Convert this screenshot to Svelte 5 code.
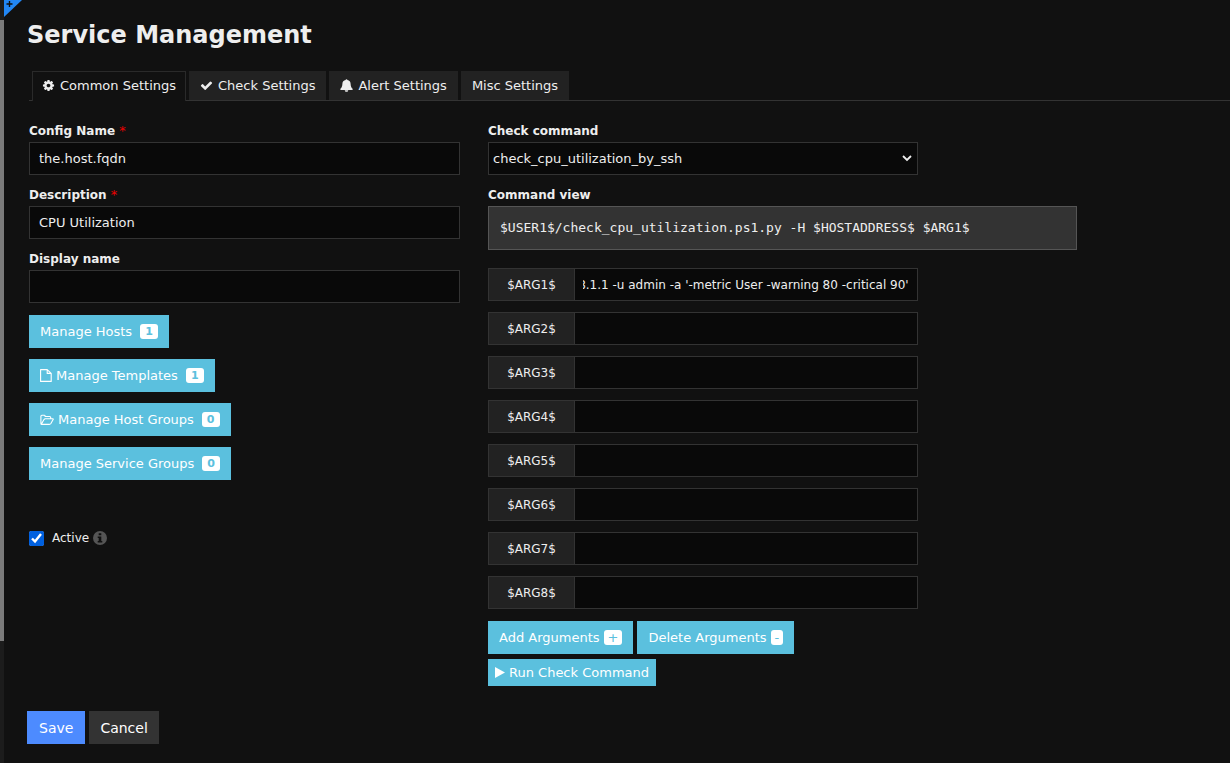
<script>
  const tabs = [
    { label: 'Common Settings', icon: 'cog' },
    { label: 'Check Settings', icon: 'check' },
    { label: 'Alert Settings', icon: 'bell' },
    { label: 'Misc Settings', icon: '' },
  ];
  let active = $state(0);

  const managers = [
    { label: 'Manage Hosts', icon: '', count: 1 },
    { label: 'Manage Templates', icon: 'file', count: 1 },
    { label: 'Manage Host Groups', icon: 'folder', count: 0 },
    { label: 'Manage Service Groups', icon: '', count: 0 },
  ];

  let args = $state([
    "-H 192.168.1.1 -u admin -a '-metric User -warning 80 -critical 90'",
    '', '', '', '', '', '', '',
  ]);

  // Long argument values show their end rather than their start.
  function showEnd(node) {
    node.scrollLeft = node.scrollWidth;
  }
</script>

{#snippet icon(name)}
  {#if name === 'cog'}
    <svg class="icon" width="13" height="13" viewBox="0 0 1792 1792" aria-hidden="true">
      <path fill="currentColor" d="M1152 896q0-106-75-181t-181-75-181 75-75 181 75 181 181 75 181-75 75-181zm512-109v222q0 12-8 23t-20 13l-185 28q-19 54-39 91 35 50 107 138 10 12 10 25t-9 23q-27 37-99 108t-94 71q-12 0-26-9l-138-108q-44 23-91 38-16 136-29 186-7 28-36 28h-222q-14 0-24.500-8.500t-11.500-21.500l-28-184q-49-16-90-37l-141 107q-10 9-25 9-14 0-25-11-126-114-165-168-7-10-7-23 0-12 8-23 15-21 51-66.500t54-70.500q-27-50-41-99l-183-27q-13-2-21-12.500t-8-23.500v-222q0-12 8-23t19-13l186-28q14-46 39-92-40-57-107-138-10-12-10-24 0-10 9-23 26-36 98.500-107.500t94.500-71.500q13 0 26 10l138 107q44-23 91-38 16-136 29-186 7-28 36-28h222q14 0 24.500 8.500t11.500 21.500l28 184q49 16 90 37l142-107q9-9 24-9 13 0 25 10 129 119 165 170 7 8 7 22 0 12-8 23-15 21-51 66.500t-54 70.500q26 50 41 98l183 28q13 2 21 12.500t8 23.500z" />
    </svg>
  {:else if name === 'check'}
    <svg class="icon" width="13" height="13" viewBox="0 0 1792 1792" aria-hidden="true">
      <path fill="currentColor" d="M1671 566q0 40-28 68l-724 724-136 136q-28 28-68 28t-68-28l-136-136-362-362q-28-28-28-68t28-68l136-136q28-28 68-28t68 28l294 295 656-657q28-28 68-28t68 28l136 136q28 28 28 68z" />
    </svg>
  {:else if name === 'bell'}
    <svg class="icon" width="13" height="13" viewBox="0 0 13 13" aria-hidden="true">
      <path d="M6.5 0.2c.6 0 .9.4.9.9 2.100.4 3.100 1.800 3.200 3.600.1 2.600.7 3.900 2 5.100V10.900H.4V9.800c1.300-1.200 1.900-2.500 2-5.100.1-1.800 1.100-3.200 3.200-3.600 0-.5.300-.9.900-.9zM4.800 11.200h3.400c0 .9-.7 1.600-1.700 1.600s-1.700-.7-1.700-1.600z" fill="currentColor" />
    </svg>
  {:else if name === 'file'}
    <svg class="icon" width="12" height="13" viewBox="0 0 12 13" aria-hidden="true">
      <path d="M.6.6h6.600l4 3.800v8H.6zM7.200.6v3.800h4" fill="none" stroke="currentColor" stroke-width="1.100" stroke-linejoin="round" />
    </svg>
  {:else if name === 'folder'}
    <svg class="icon" width="14" height="12" viewBox="0 0 14 12" aria-hidden="true">
      <path d="M.9 9.800V2.200q0-1 1-1h2.300q.9 0 .9.900v.4h4.600q1 0 1 1v1.300M1.300 10.300 4 5.600q.5-.8 1.300-.8h7.500q.8 0 .3.800L10.900 9.500q-.6.900-1.500.9H1.500q-.7 0-.6-.8" fill="none" stroke="currentColor" stroke-width="1.100" stroke-linejoin="round" />
    </svg>
  {/if}
{/snippet}

<div class="page">
  <div class="rail" aria-hidden="true"><div class="thumb"></div></div>
  <svg class="corner" width="18" height="17" viewBox="0 0 18 17" aria-hidden="true">
    <path d="M0 0h18L0 17z" fill="#2287f5" />
    <path d="M5.500 1v6M2.500 4h6" stroke="#111" stroke-width="1.400" />
  </svg>

  <main>
    <h1>Service Management</h1>

    <nav class="tabs">
      {#each tabs as tab, i}
        <button type="button" class="tab" class:active={active === i} onclick={() => (active = i)}>
          {@render icon(tab.icon)}<span>{tab.label}</span>
        </button>
      {/each}
    </nav>

    <form onsubmit={(e) => e.preventDefault()}>
      <div class="columns">
        <section class="left">
          <div class="field">
            <label for="config">Config Name <span class="req">*</span></label>
            <input id="config" class="box" type="text" value="the.host.fqdn" />
          </div>
          <div class="field">
            <label for="desc">Description <span class="req">*</span></label>
            <input id="desc" class="box" type="text" value="CPU Utilization" />
          </div>
          <div class="field">
            <label for="display">Display name</label>
            <input id="display" class="box" type="text" value="" />
          </div>
          <div class="managers">
            {#each managers as m}
              <button type="button" class="info">
                {@render icon(m.icon)}<span>{m.label}</span><span class="badge count">{m.count}</span>
              </button>
            {/each}
          </div>
          <div class="active-row">
            <input id="active" type="checkbox" checked />
            <label for="active">Active</label>
            <svg width="14" height="14" viewBox="0 0 14 14" aria-hidden="true">
              <circle cx="7" cy="7" r="7" fill="#555" />
              <path d="M5.700 2.200h2.600v2H5.700zM4.700 5.400h3.600v4.500h1v1.600H4.700V9.900h1V7h-1z" fill="#111" />
            </svg>
          </div>
        </section>

        <section class="right">
          <div class="field narrow">
            <label for="command">Check command</label>
            <div class="select">
              <select id="command" class="box">
                <option>check_cpu_utilization_by_ssh</option>
              </select>
              <svg width="10" height="7" viewBox="0 0 10 7" aria-hidden="true">
                <path d="M1 1l4 4 4-4" fill="none" stroke="#eee" stroke-width="1.800" />
              </svg>
            </div>
          </div>
          <div class="field view">
            <span class="title">Command view</span>
            <pre>$USER1$/check_cpu_utilization.ps1.py -H $HOSTADDRESS$ $ARG1$</pre>
          </div>
          <div class="args narrow">
            {#each args as _, i}
              <div class="arg">
                <label for="arg{i + 1}">$ARG{i + 1}$</label>
                <input id="arg{i + 1}" class="box" type="text" bind:value={args[i]} use:showEnd />
              </div>
            {/each}
          </div>
          <div class="actions">
            <button type="button" class="info" onclick={() => args.push('')}>
              <span>Add Arguments</span><span class="badge">+</span>
            </button>
            <button type="button" class="info" onclick={() => args.pop()}>
              <span>Delete Arguments</span><span class="badge">-</span>
            </button>
          </div>
          <button type="button" class="info small">
            <svg width="10" height="11" viewBox="0 0 10 11" aria-hidden="true"><path d="M0 0l10 5.500L0 11z" fill="#fff" /></svg>
            <span>Run Check Command</span>
          </button>
        </section>
      </div>

      <div class="footer">
        <button type="submit" class="save">Save</button>
        <button type="button" class="cancel">Cancel</button>
      </div>
    </form>
  </main>
</div>

<style>
  :global(body) {
    background: #111;
  }
  .page {
    position: relative;
    display: flex;
    min-height: 100vh;
    background: #111;
    color: #eee;
    font: 13px/18px Verdana, "DejaVu Sans", sans-serif;
  }
  .page * {
    box-sizing: border-box;
  }
  button,
  input,
  select {
    margin: 0;
    border: 0;
    border-radius: 0;
    color: inherit;
    font: inherit;
  }
  button {
    cursor: pointer;
    white-space: nowrap;
  }
  .icon,
  svg {
    flex: none;
  }
  .rail {
    width: 4px;
    flex: none;
    padding-top: 20px;
    background: #1c1c1c;
  }
  .thumb {
    height: 621px;
    background: #7b7b7b;
  }
  .corner {
    position: absolute;
    left: 4px;
    top: 0;
  }
  main {
    flex: 1;
    min-width: 0;
    padding: 20px 0 18px 23px;
  }
  h1 {
    margin: 0 0 21px;
    font-size: 24px;
    line-height: 30px;
    font-weight: bold;
  }
  .tabs {
    display: flex;
    gap: 3px;
    margin-left: 2px;
    padding-left: 3px;
    height: 30px;
    border-bottom: 1px solid #333;
  }
  .tab {
    display: flex;
    align-items: center;
    gap: 5px;
    height: 29px;
    padding: 0 11px;
    background: #222;
  }
  .tab.active {
    height: 30px;
    padding: 0 9px 2px;
    border: 1px solid #2a2a2a;
    border-bottom: 0;
    background: #111;
  }
  .columns {
    display: grid;
    grid-template-columns: minmax(0, 431px) minmax(0, 589px);
    gap: 28px;
    padding: 22px 16px 0 2px;
  }
  .field {
    display: flex;
    flex-direction: column;
    gap: 3px;
    margin-bottom: 12px;
  }
  .field label,
  .title {
    font-size: 12px;
    line-height: 16px;
    font-weight: bold;
  }
  .req {
    color: #e00;
    font-size: 13px;
    font-weight: normal;
  }
  .box {
    width: 100%;
    height: 33px;
    padding: 0 9px;
    border: 1px solid #333;
    background: #090909;
  }
  .narrow {
    width: 73%;
  }
  .select {
    position: relative;
  }
  .select .box {
    display: block;
    padding: 0 24px 0 4px;
    appearance: none;
  }
  .select svg {
    position: absolute;
    right: 6px;
    top: 13px;
    pointer-events: none;
  }
  pre {
    margin: 0;
    padding: 12px 11px;
    border: 1px solid #555;
    background: #333;
    font: 13px/18px "DejaVu Sans Mono", monospace;
    white-space: pre-wrap;
  }
  .view {
    margin-bottom: 18px;
  }
  .args {
    display: flex;
    flex-direction: column;
    gap: 11px;
  }
  .arg {
    display: flex;
    font-size: 12px;
  }
  .arg label {
    display: flex;
    align-items: center;
    justify-content: center;
    flex: 0 0 86px;
    border: 1px solid #333;
    border-right: 0;
    background: #222;
  }
  .arg .box {
    flex: 1;
    min-width: 0;
    padding: 0 8px;
  }
  .info {
    display: flex;
    align-items: center;
    height: 33px;
    padding: 0 11px;
    background: #5bc0de;
    color: #fff;
  }
  .info .icon {
    margin-right: 4px;
  }
  .badge {
    margin-left: 4px;
    padding: 0 4px;
    border-radius: 3px;
    background: #fff;
    color: #5bc0de;
    line-height: 15px;
  }
  .count {
    margin-left: 8px;
    padding: 0 5px;
    font-size: 11px;
    font-weight: bold;
  }
  .managers {
    display: flex;
    flex-direction: column;
    align-items: flex-start;
    gap: 11px;
  }
  .active-row {
    display: flex;
    align-items: center;
    gap: 4px;
    margin-top: 49px;
    font-size: 12px;
  }
  .active-row input {
    width: 15px;
    height: 15px;
    margin-right: 4px;
    accent-color: #0060df;
  }
  .actions {
    display: flex;
    gap: 4px;
    margin: 12px 0 5px;
  }
  .info.small {
    height: 27px;
    gap: 4px;
    padding: 0 7px;
  }
  .footer {
    display: flex;
    gap: 4px;
    margin-top: 25px;
  }
  .footer button {
    height: 33px;
    padding: 0 12px;
    font-size: 14px;
  }
  .footer .save {
    background: #4d8bff;
    color: #fff;
  }
  .footer .cancel {
    padding: 0 11px;
    background: #333;
    color: #fff;
  }
</style>
